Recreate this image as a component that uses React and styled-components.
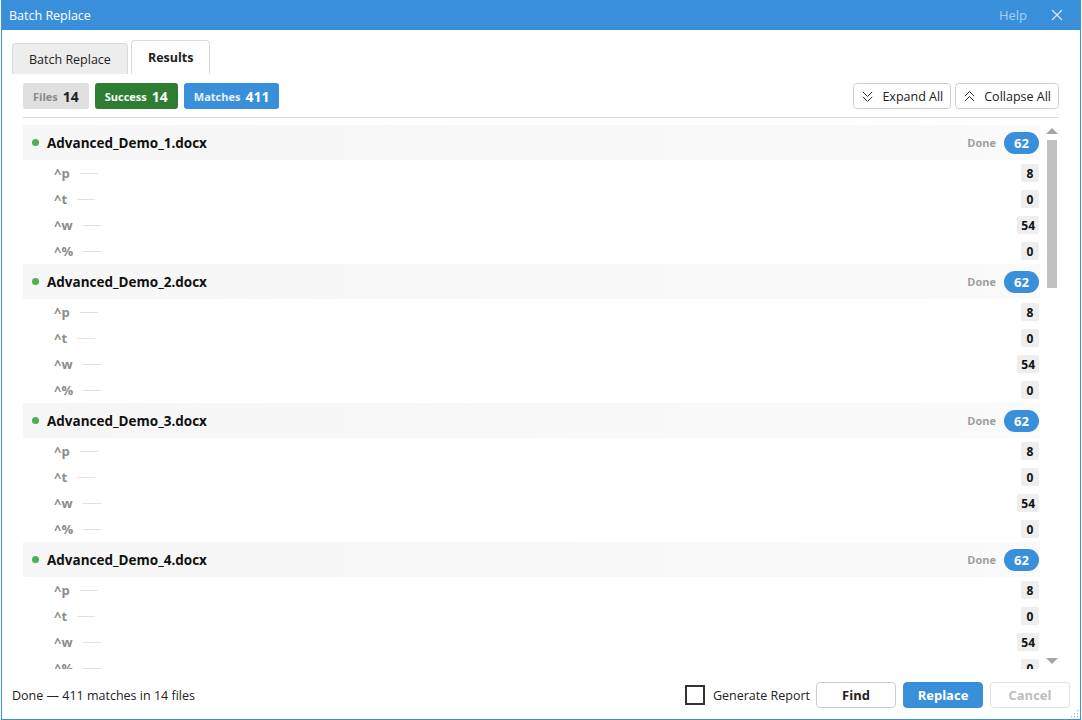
import React from "react";
import styled, { createGlobalStyle } from "styled-components";

const GlobalStyle = createGlobalStyle`
  html, body { margin: 0; padding: 0; background: #ffffff; }
  body { font-family: "Open Sans", "Noto Sans", "Liberation Sans", sans-serif; color: #222; }
  * { box-sizing: border-box; }
`;

const BLUE = "#3a8fdb";

const Window = styled.div`
  position: relative;
  margin-left: 1px;
  width: 1080px;
  height: 720px;
  border: 1px solid ${BLUE};
  border-top: none;
  display: flex;
  flex-direction: column;
  background: #fff;
`;

const TitleBar = styled.div`
  height: 30px;
  flex: none;
  background: ${BLUE};
  display: flex;
  align-items: center;
  padding: 0 17px 0 7px;
  color: #fff;
  font-size: 12.5px;
`;

const Title = styled.span`
  flex: 1;
`;

const Help = styled.span`
  color: #a9cff3;
  font-size: 13px;
  margin-right: 24px;
`;

const CloseIcon = styled.svg`
  width: 12px;
  height: 12px;
  display: block;
`;

const Body = styled.div`
  flex: 1;
  min-height: 0;
  display: flex;
  flex-direction: column;
  padding: 10px 10px 0;
`;

const TabBar = styled.div`
  display: flex;
  align-items: flex-end;
  gap: 3px;
  height: 34px;
  flex: none;
`;

const Tab = styled.div`
  height: ${(p) => (p.$active ? 34 : 31)}px;
  padding: 0 ${(p) => (p.$active ? 16 : 16)}px;
  display: flex;
  align-items: center;
  border: 1px solid #dadada;
  border-bottom: none;
  border-radius: 4px 4px 0 0;
  background: ${(p) => (p.$active ? "#fff" : "#ededed")};
  font-size: ${(p) => (p.$active ? 12.5 : 12.5)}px;
  font-weight: ${(p) => (p.$active ? 700 : 400)};
  color: #222;
`;

const Panel = styled.div`
  flex: 1;
  min-height: 0;
  display: flex;
  flex-direction: column;
  padding: 9px 11px 0;
`;

const Toolbar = styled.div`
  display: flex;
  align-items: center;
  gap: 6px;
  height: 26px;
  flex: none;
`;

const Badge = styled.div`
  height: 26px;
  padding: 0 10px;
  border-radius: 3px;
  display: inline-flex;
  align-items: center;
  gap: 5px;
  background: ${(p) => p.$bg};
`;

const BadgeLabel = styled.span`
  font-size: 11px;
  font-weight: 700;
  color: ${(p) => p.$color};
`;

const BadgeNum = styled.span`
  font-size: 14px;
  font-weight: 700;
  color: ${(p) => p.$color};
`;

const Spacer = styled.div`
  flex: 1;
`;

const ToolButton = styled.button`
  height: 26px;
  padding: 0 7px 0 6px;
  display: inline-flex;
  align-items: center;
  gap: 7px;
  border: 1px solid #cfcfcf;
  border-radius: 4px;
  background: #fff;
  font-family: inherit;
  font-size: 12.5px;
  color: #222;
  margin-left: ${(p) => p.$ml || 0}px;
`;

const Separator = styled.div`
  margin-top: 8px;
  border-top: 1px solid #dcdcdc;
  flex: none;
`;

const ListWrap = styled.div`
  flex: 1;
  min-height: 0;
  margin-top: 7px;
  display: flex;
  gap: 5px;
`;

const List = styled.div`
  flex: 1;
  overflow: hidden;
`;

const GroupHeader = styled.div`
  height: 35px;
  display: flex;
  align-items: center;
  padding: 0 1px 0 9px;
  background: linear-gradient(to right, #f6f6f6, #fafafa);
`;

const Dot = styled.span`
  width: 7px;
  height: 7px;
  border-radius: 50%;
  background: #4caf50;
  margin-right: 8px;
`;

const FileName = styled.span`
  font-size: 13.5px;
  font-weight: 700;
  color: #111;
  flex: 1;
`;

const Status = styled.span`
  font-size: 11px;
  font-weight: 700;
  color: #9e9e9e;
  margin-right: 8px;
`;

const CountPill = styled.span`
  width: 35px;
  height: 22px;
  border-radius: 11px;
  background: ${BLUE};
  color: #fff;
  font-size: 13px;
  font-weight: 700;
  display: flex;
  align-items: center;
  justify-content: center;
`;

const ItemRow = styled.div`
  height: 26px;
  display: flex;
  align-items: center;
  padding: 0 1px 0 31px;
`;

const ItemLabel = styled.span`
  font-size: 13px;
  font-weight: 700;
  color: #8c8c8c;
`;

const Rule = styled.span`
  width: 18px;
  height: 1px;
  background: #e2e2e2;
  margin-left: 10px;
`;

const ItemValue = styled.span`
  margin-left: auto;
  height: 18px;
  min-width: 18px;
  padding: 0 4px;
  border-radius: 2px;
  background: #eeeeee;
  font-size: 12px;
  font-weight: 700;
  color: #111;
  display: flex;
  align-items: center;
  justify-content: center;
`;

const ScrollCol = styled.div`
  width: 14px;
  flex: none;
  display: flex;
  flex-direction: column;
  align-items: center;
  padding: 3px 0 5px;
`;

const Arrow = styled.div`
  width: 0;
  height: 0;
  border-left: 6px solid transparent;
  border-right: 6px solid transparent;
  ${(p) =>
    p.$up
      ? "border-bottom: 6px solid #a6a6a6;"
      : "border-top: 6px solid #a6a6a6; margin-top: auto;"}
`;

const Thumb = styled.div`
  width: 10px;
  height: 148px;
  margin-top: 6px;
  background: #c1c1c1;
`;

const Footer = styled.div`
  height: 30px;
  margin: 11px 0 9px;
  flex: none;
  display: flex;
  align-items: center;
  font-size: 12.5px;
`;

const StatusText = styled.span`
  flex: 1;
  color: #222;
`;

const Check = styled.span`
  width: 20px;
  height: 20px;
  border: 2px solid #333;
  background: #fff;
`;

const CheckLabel = styled.span`
  margin-left: 8px;
  color: #222;
`;

const FootButton = styled.button`
  width: 80px;
  height: 26px;
  margin-left: ${(p) => p.$ml}px;
  border-radius: 4px;
  font-family: inherit;
  font-size: 13px;
  font-weight: 700;
  border: 1px solid
    ${(p) => (p.$variant === "primary" ? BLUE : p.$variant === "disabled" ? "#e0e0e0" : "#cccccc")};
  background: ${(p) => (p.$variant === "primary" ? BLUE : "#fff")};
  color: ${(p) => (p.$variant === "primary" ? "#fff" : p.$variant === "disabled" ? "#bdbdbd" : "#222")};
`;

const Grip = styled.svg`
  position: absolute;
  right: 1px;
  bottom: 1px;
  width: 10px;
  height: 10px;
`;

const groups = Array.from({ length: 14 }, (_, i) => ({
  name: `Advanced_Demo_${i + 1}.docx`,
  total: 62,
  items: [
    ["^p", 8],
    ["^t", 0],
    ["^w", 54],
    ["^%", 0],
  ],
}));

const Chevrons = ({ up }) => (
  <svg width="15" height="15" viewBox="0 0 24 24" fill="none" stroke="#333" strokeWidth="1.6" strokeLinecap="round" strokeLinejoin="round">
    {up ? (
      <>
        <path d="M5 11 12 4l7 7" />
        <path d="M5 19l7-7 7 7" />
      </>
    ) : (
      <>
        <path d="M5 5l7 7 7-7" />
        <path d="M5 13l7 7 7-7" />
      </>
    )}
  </svg>
);

export default function App() {
  return (
    <>
      <GlobalStyle />
      <Window>
        <TitleBar>
          <Title>Batch Replace</Title>
          <Help>Help</Help>
          <CloseIcon viewBox="0 0 12 12">
            <path d="M1 1l10 10M11 1L1 11" stroke="#dbeafb" strokeWidth="1.2" />
          </CloseIcon>
        </TitleBar>
        <Body>
          <TabBar>
            <Tab>Batch Replace</Tab>
            <Tab $active>Results</Tab>
          </TabBar>
          <Panel>
            <Toolbar>
              <Badge $bg="#e0e0e0">
                <BadgeLabel $color="#8a8a8a">Files</BadgeLabel>
                <BadgeNum $color="#222">14</BadgeNum>
              </Badge>
              <Badge $bg="#2e7d32">
                <BadgeLabel $color="#fff">Success</BadgeLabel>
                <BadgeNum $color="#fff">14</BadgeNum>
              </Badge>
              <Badge $bg={BLUE}>
                <BadgeLabel $color="#e6f1fc">Matches</BadgeLabel>
                <BadgeNum $color="#fff">411</BadgeNum>
              </Badge>
              <Spacer />
              <ToolButton>
                <Chevrons />
                Expand All
              </ToolButton>
              <ToolButton $ml={-2}>
                <Chevrons up />
                Collapse All
              </ToolButton>
            </Toolbar>
            <Separator />
            <ListWrap>
              <List>
                {groups.map((g) => (
                  <div key={g.name}>
                    <GroupHeader>
                      <Dot />
                      <FileName>{g.name}</FileName>
                      <Status>Done</Status>
                      <CountPill>{g.total}</CountPill>
                    </GroupHeader>
                    {g.items.map(([label, value]) => (
                      <ItemRow key={label}>
                        <ItemLabel>{label}</ItemLabel>
                        <Rule />
                        <ItemValue>{value}</ItemValue>
                      </ItemRow>
                    ))}
                  </div>
                ))}
              </List>
              <ScrollCol>
                <Arrow $up />
                <Thumb />
                <Arrow />
              </ScrollCol>
            </ListWrap>
          </Panel>
          <Footer>
            <StatusText>Done — 411 matches in 14 files</StatusText>
            <Check />
            <CheckLabel>Generate Report</CheckLabel>
            <FootButton $ml={6}>Find</FootButton>
            <FootButton $ml={7} $variant="primary">Replace</FootButton>
            <FootButton $ml={7} $variant="disabled">Cancel</FootButton>
          </Footer>
        </Body>
        <Grip viewBox="0 0 10 10">
          {[[8, 2], [8, 5], [5, 5], [8, 8], [5, 8], [2, 8]].map(([x, y]) => (
            <rect key={`${x}-${y}`} x={x} y={y} width="1.2" height="1.2" fill="#b0b0b0" />
          ))}
        </Grip>
      </Window>
    </>
  );
}
